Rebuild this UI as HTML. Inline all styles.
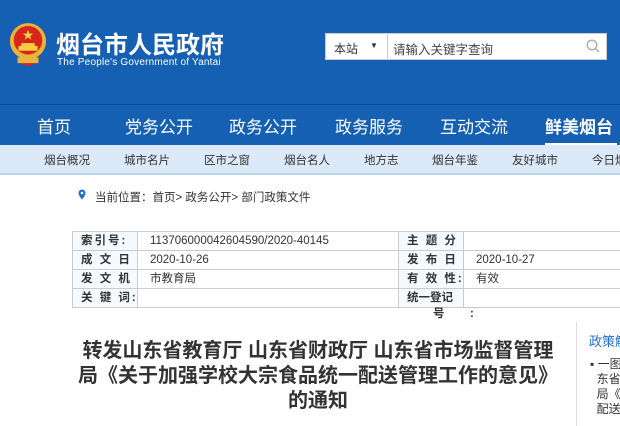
<!DOCTYPE html><html><head><meta charset="utf-8"><style>
*{margin:0;padding:0;box-sizing:border-box}
body{width:620px;height:426px;overflow:hidden;background:#fff;font-family:"Liberation Sans","Noto Sans CJK SC",sans-serif;position:relative}
.a{position:absolute;white-space:nowrap}
.hdr{position:absolute;left:0;top:0;width:620px;height:104px;background:#1560b3}
.nav{position:absolute;left:0;top:104px;width:620px;height:41px;background:#1560b3;border-top:1px solid #0d4a92}
.nav span{position:absolute;top:8px;color:#fff;font-size:17px;white-space:nowrap}
.sub{position:absolute;left:0;top:145px;width:620px;height:30px;background:#dbe9f8;border-bottom:2px solid #b7d4f0;overflow:hidden}
.sub span{position:absolute;top:7px;font-size:11.5px;color:#333;white-space:nowrap}
.c{position:absolute;height:20px;border:1px solid #ccc;font-size:11.5px;color:#333;line-height:18px;overflow:hidden;white-space:nowrap}
.l{background:#f5faff;font-weight:bold;padding-left:8px;letter-spacing:2px}
.v{padding-left:12px}
</style></head><body>
<div class="hdr"></div>
<svg class="a" style="left:8px;top:20px" width="40" height="50" viewBox="0 0 42 50">
<circle cx="21" cy="21" r="19" fill="#e8b53a"/><circle cx="21" cy="20" r="15" fill="#d8261c"/>
<polygon points="21,9 22.5,13 26.5,13 23.3,15.5 24.5,19.5 21,17 17.5,19.5 18.7,15.5 15.5,13 19.5,13" fill="#f4d03f"/>
<rect x="11" y="26" width="20" height="5" fill="#f4d03f"/><rect x="14" y="23" width="14" height="3" fill="#f4d03f"/>
<path d="M4 30 Q8 45 21 47 Q34 45 38 30 L34 40 L8 40Z" fill="#d8261c"/><rect x="10" y="38" width="22" height="6" fill="#e8b53a"/>
</svg>
<div class="a" style="left:56px;top:25px;color:#fff;font-size:24px;font-weight:bold">烟台市人民政府</div>
<div class="a" style="left:57px;top:57px;color:#fff;font-size:10px;letter-spacing:0.2px">The People's Government of Yantai</div>
<div class="a" style="left:325px;top:33px;width:282px;height:27px;background:#fff;border:1px solid #ccc"></div>
<div class="a" style="left:387px;top:33px;width:1px;height:27px;background:#ccc"></div>
<div class="a" style="left:334px;top:40px;font-size:12px;color:#333">本站</div>
<div class="a" style="left:370px;top:41px;font-size:8px;color:#333">▼</div>
<div class="a" style="left:393px;top:39px;font-size:12.5px;color:#444">请输入关键字查询</div>
<svg class="a" style="left:586px;top:39px" width="14" height="14"><circle cx="6" cy="6" r="4.8" fill="none" stroke="#aaa" stroke-width="1.3"/><line x1="9.5" y1="9.5" x2="13" y2="13" stroke="#aaa" stroke-width="1.3"/></svg>
<div class="nav"><span style="left:37px">首页</span><span style="left:125px">党务公开</span><span style="left:229px">政务公开</span><span style="left:335px">政务服务</span><span style="left:440px">互动交流</span><span style="left:545px;font-weight:bold">鲜美烟台</span>
<div class="a" style="left:545px;top:38px;width:72px;height:2px;background:#fff"></div></div>
<div class="sub"><span style="left:44px">烟台概况</span><span style="left:124px">城市名片</span><span style="left:204px">区市之窗</span><span style="left:284px">烟台名人</span><span style="left:364px">地方志</span><span style="left:432px">烟台年鉴</span><span style="left:512px">友好城市</span><span style="left:592px">今日烟台</span></div>
<svg class="a" style="left:78px;top:189px" width="8" height="11"><path d="M4 0.5a3.5 3.5 0 0 1 3.5 3.5c0 2.5-3.5 6.5-3.5 6.5S0.5 6.5 0.5 4A3.5 3.5 0 0 1 4 0.5z" fill="#1e6fd0"/><circle cx="4" cy="4" r="1.3" fill="#fff"/></svg>
<div class="a" style="left:95px;top:189px;font-size:11.5px;color:#333">当前位置：首页&gt; 政务公开&gt; 部门政策文件</div>

<div class="c l" style="left:72px;top:231px;width:66px">索引号:</div>
<div class="c v" style="left:137px;top:231px;width:262px">113706000042604590/2020-40145</div>
<div class="c l" style="left:398px;top:231px;width:66px">主 题 分</div>
<div class="c v" style="left:463px;top:231px;width:160px"></div>
<div class="c l" style="left:72px;top:250px;width:66px">成 文 日</div>
<div class="c v" style="left:137px;top:250px;width:262px">2020-10-26</div>
<div class="c l" style="left:398px;top:250px;width:66px">发 布 日</div>
<div class="c v" style="left:463px;top:250px;width:160px">2020-10-27</div>
<div class="c l" style="left:72px;top:269px;width:66px">发 文 机</div>
<div class="c v" style="left:137px;top:269px;width:262px">市教育局</div>
<div class="c l" style="left:398px;top:269px;width:66px">有 效 性:</div>
<div class="c v" style="left:463px;top:269px;width:160px">有效</div>
<div class="c l" style="left:72px;top:288px;width:66px">关 键 词:</div>
<div class="c v" style="left:137px;top:288px;width:262px"></div>
<div class="c l" style="left:398px;top:288px;width:66px;letter-spacing:0">统一登记</div>
<div class="c v" style="left:463px;top:288px;width:160px"></div>
<div class="a" style="left:433px;top:305px;font-size:11.5px;font-weight:bold;color:#333">号&nbsp;&nbsp;&nbsp;&nbsp;&nbsp;&nbsp;&nbsp;&nbsp;:</div>

<div class="a" style="left:74px;top:339px;width:488px;text-align:center;font-size:20px;font-weight:bold;color:#333;line-height:25px;white-space:normal">转发山东省教育厅 山东省财政厅 山东省市场监督管理局《关于加强学校大宗食品统一配送管理工作的意见》的通知</div>
<div class="a" style="left:576px;top:322px;width:1px;height:104px;background:#ddd"></div>
<div class="a" style="left:589px;top:331px;font-size:13px;color:#1e6fd0">政策解读</div>
<div class="a" style="left:590px;top:357px;font-size:12px;color:#333;line-height:15px">▪ 一图<br>&nbsp;&nbsp;东省<br>&nbsp;&nbsp;局《<br>&nbsp;&nbsp;配送</div>
</body></html>
